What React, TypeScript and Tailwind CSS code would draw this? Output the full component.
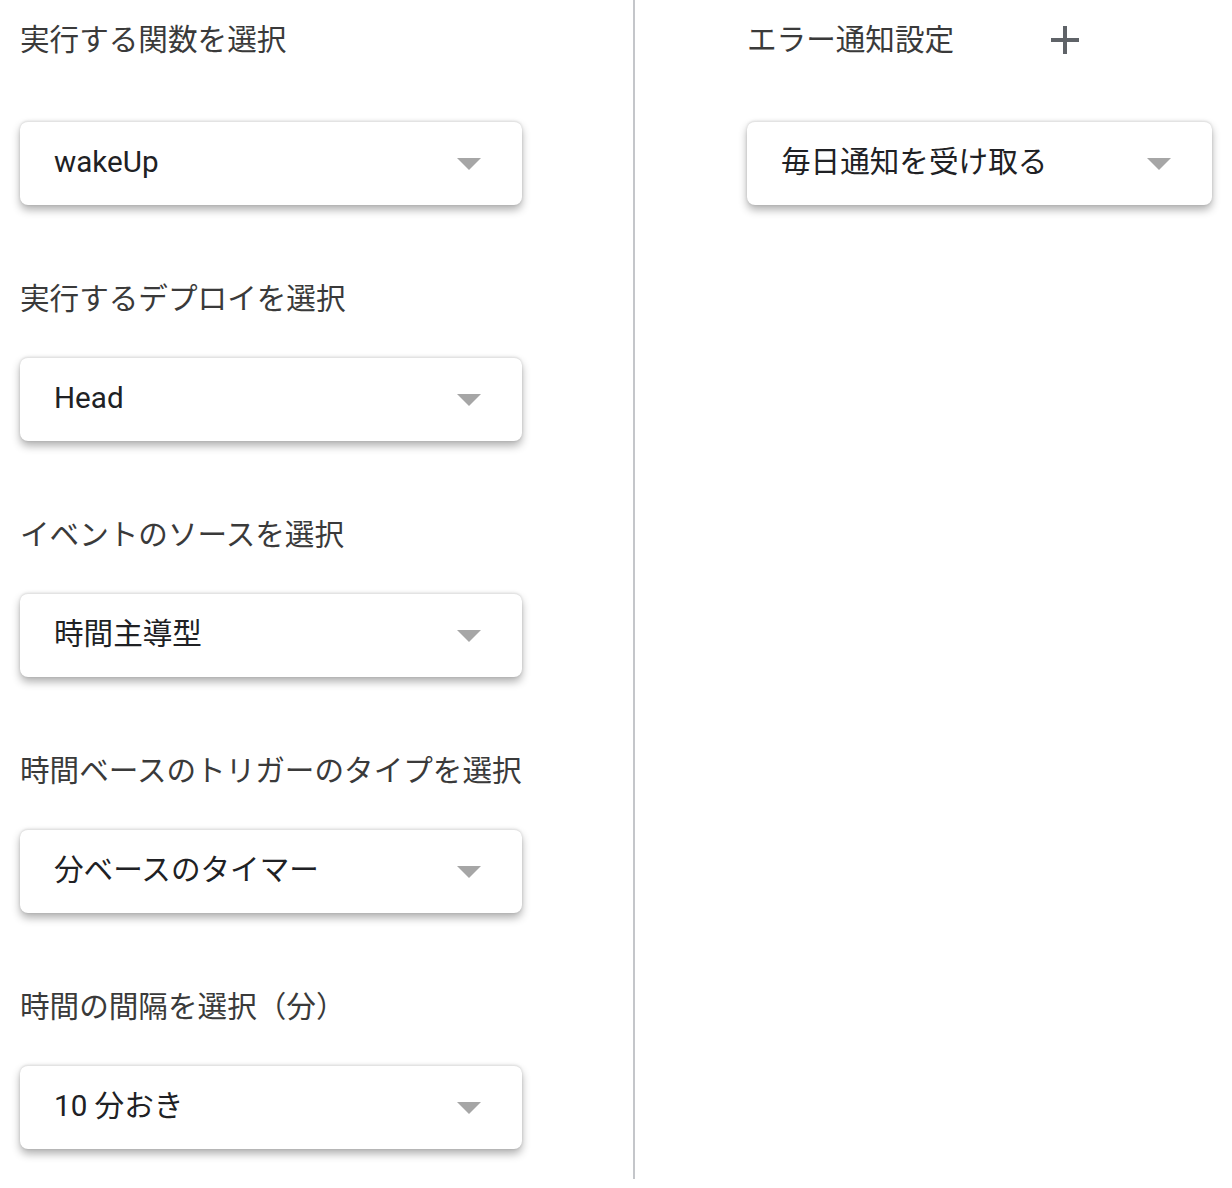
const leftFields = [
  { label: '実行する関数を選択', value: 'wakeUp' },
  { label: '実行するデプロイを選択', value: 'Head' },
  { label: 'イベントのソースを選択', value: '時間主導型' },
  { label: '時間ベースのトリガーのタイプを選択', value: '分ベースのタイマー' },
  { label: '時間の間隔を選択（分）', value: '10 分おき' },
]

const Caret = () => (
  <svg width="24" height="12" viewBox="0 0 24 12" className="shrink-0">
    <path d="M0 0 L24 0 L12 12 Z" fill="#a6a6a6" />
  </svg>
)

const SelectBox = ({ value }: { value: string }) => (
  <div className="flex items-center justify-between h-[84px] pl-[34px] pr-[41px] bg-white rounded-[8px] border-t border-[#e3e3e3] shadow-[0_5px_8px_rgba(0,0,0,0.3),0_0_3px_rgba(0,0,0,0.12)]">
    <span className="text-[29.6px] leading-[40px] text-[#202124] pb-[3px]">{value}</span>
    <Caret />
  </div>
)

const App = () => {
  return (
    <div className="flex w-[1232px] h-[1188px] bg-white font-['Roboto','Noto_Sans_CJK_JP',sans-serif]">
      <div className="flex flex-col w-[502px] ml-5 pt-5">
        {leftFields.map((f, i) => (
          <div key={f.label} className={i === 0 ? '' : 'mt-[74px]'}>
            <p className="text-[29.6px] leading-[40px] text-[#3a3a3a] whitespace-nowrap">
              {f.label}
            </p>
            <div className={i === 0 ? 'mt-[61px]' : 'mt-[38px]'}>
              <SelectBox value={f.value} />
            </div>
          </div>
        ))}
      </div>

      <div className="w-[2px] h-[1179px] ml-[111px] bg-[#c4c6ca]" />

      <div className="flex flex-col w-[465px] ml-[112px] pt-5">
        <div className="flex items-center">
          <p className="text-[29.6px] leading-[40px] text-[#3a3a3a] whitespace-nowrap">
            エラー通知設定
          </p>
          <svg width="28" height="28" viewBox="0 0 28 28" className="ml-[97px]">
            <path d="M12 0 H16 V12 H28 V16 H16 V28 H12 V16 H0 V12 H12 Z" fill="#5f6368" />
          </svg>
        </div>
        <div className="mt-[61px]">
          <SelectBox value="毎日通知を受け取る" />
        </div>
      </div>
    </div>
  )
}

export default App
